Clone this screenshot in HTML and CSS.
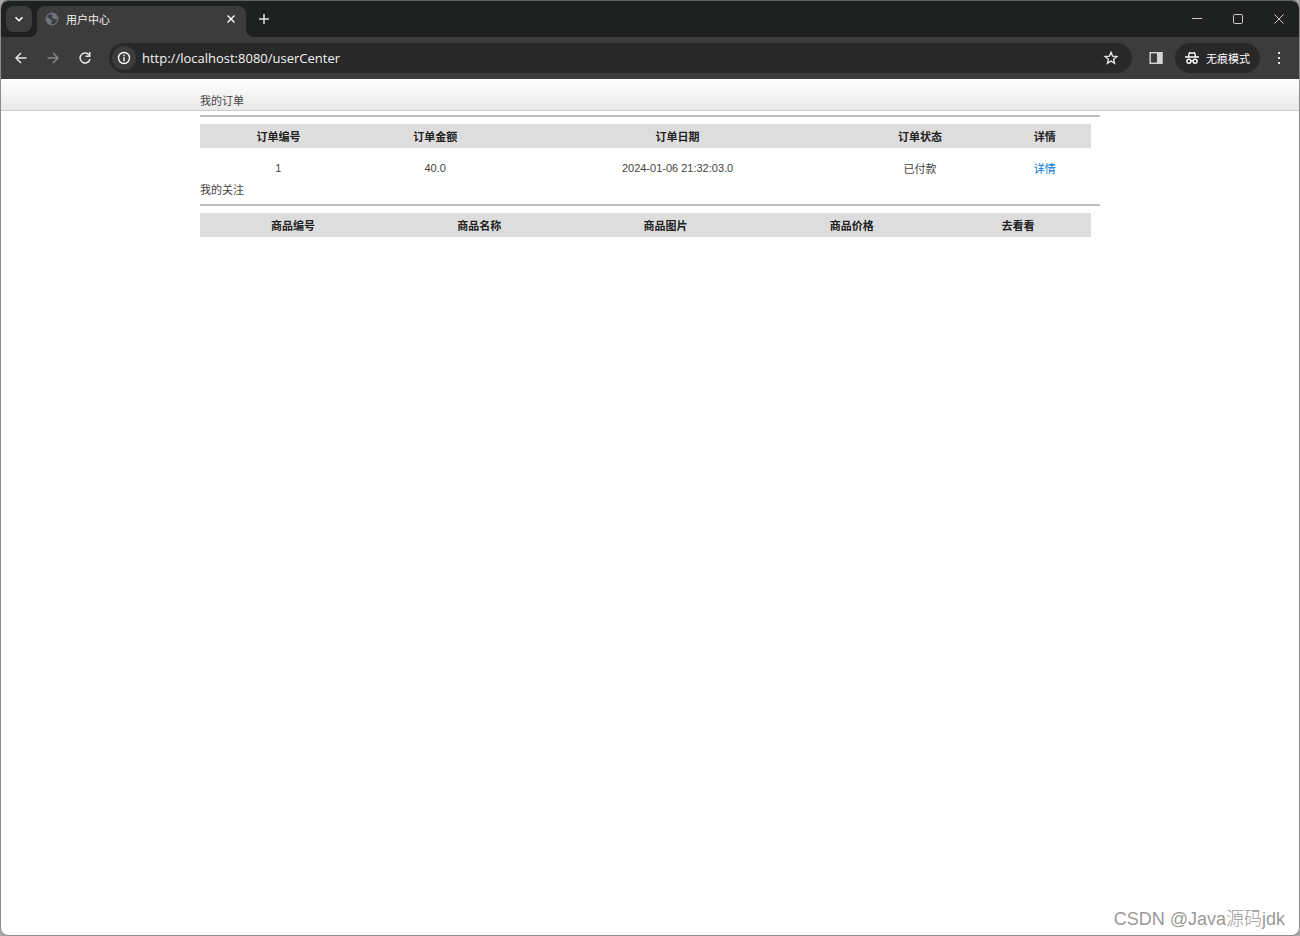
FILE: index.html
```html
<!DOCTYPE html>
<html lang="zh-CN">
<head>
    <meta charset="UTF-8">
    <meta name="viewport" content="width=device-width, initial-scale=1.0">
    <title>用户中心</title>
    <link rel="stylesheet" href="styles.css">
</head>
<body>
    <div class="window">
        <div class="titlebar">
            <button class="tab-search" aria-label="搜索标签页">
                <svg width="10" height="10" viewBox="0 0 10 10"><path d="M1.500 3.200l3.500 3.500 3.500-3.500" fill="none" stroke="#fff" stroke-width="1.600"/></svg>
            </button>
            <div class="tab">
                <svg width="14" height="14" viewBox="0 0 14 14"><circle cx="7" cy="7" r="5.800" fill="#3c3c3c" stroke="#6f757b" stroke-width="1.200"/><path d="M1.500 5.500c1.800.2 3 .6 3.400 1.600.5 1 1.700.4 2 1.500.3 1.200-.8 1.600-.7 3.900C3.500 12.300 1.200 9.500 1.500 5.500zM6 1.500c0 1.800 1.500 1.300 1.600 2.400.1 1-1.600.9-.9 1.900.7.9 2.300.2 3 1 .6.700 1.500.8 2.800.4-.1-3-2.400-5.700-6.500-5.700z" fill="#6f757b"/></svg>
                <span class="tab-title">用户中心</span>
                <button class="icon-btn tab-close" aria-label="关闭标签页">
                    <svg width="10" height="10" viewBox="0 0 10 10"><path d="M1.500 1.500l7 7M8.500 1.500l-7 7" stroke="#fff" stroke-width="1.400"/></svg>
                </button>
            </div>
            <button class="icon-btn new-tab" aria-label="新标签页">
                <svg width="12" height="12" viewBox="0 0 12 12"><path d="M6 1v10M1 6h10" stroke="#e3e3e3" stroke-width="1.500"/></svg>
            </button>
            <div class="window-controls">
                <button class="icon-btn" aria-label="最小化"><svg width="10" height="10" viewBox="0 0 10 10"><path d="M0 4.500h10" stroke="#ccc"/></svg></button>
                <button class="icon-btn" aria-label="最大化"><svg width="10" height="10" viewBox="0 0 10 10"><rect x=".5" y=".5" width="9" height="9" rx="1.200" fill="none" stroke="#ccc"/></svg></button>
                <button class="icon-btn" aria-label="关闭"><svg width="10" height="10" viewBox="0 0 10 10"><path d="M.5.5l9 9M9.500.5l-9 9" stroke="#ccc"/></svg></button>
            </div>
        </div>

        <div class="toolbar">
            <button class="icon-btn" aria-label="后退"><svg width="14" height="14" viewBox="0 0 14 14"><path d="M12.500 7h-10M7 2L2 7l5 5" fill="none" stroke="#e3e3e3" stroke-width="1.500"/></svg></button>
            <button class="icon-btn" aria-label="前进"><svg width="14" height="14" viewBox="0 0 14 14"><path d="M1.500 7h10M7 2l5 5-5 5" fill="none" stroke="#858585" stroke-width="1.500"/></svg></button>
            <button class="icon-btn" aria-label="重新加载"><svg width="14" height="14" viewBox="0 0 14 14"><path d="M11.300 4.300A5 5 0 1 0 12 8" fill="none" stroke="#e3e3e3" stroke-width="1.500"/><path d="M12.500 1v5h-5V4.500H11V1z" fill="#e3e3e3"/></svg></button>
            <div class="address">
                <button class="icon-btn site-info" aria-label="网站信息"><svg width="14" height="14" viewBox="0 0 14 14"><circle cx="7" cy="7" r="5.500" fill="none" stroke="#fff" stroke-width="1.400"/><path d="M7 6.200v4M7 3.700v1.500" stroke="#fff" stroke-width="1.400"/></svg></button>
                <input class="url" type="text" aria-label="地址栏" value="http://localhost:8080/userCenter">
                <button class="icon-btn" aria-label="收藏"><svg width="16" height="16" viewBox="0 0 16 16"><path d="M8 2.300l1.600 3.900 4.200.3-3.200 2.700 1 4.100L8 11.100l-3.600 2.200 1-4.100-3.200-2.700 4.200-.3z" fill="none" stroke="#e3e3e3" stroke-width="1.400"/></svg></button>
            </div>
            <button class="icon-btn side-panel" aria-label="侧边栏"><svg width="14" height="14" viewBox="0 0 14 14"><rect x="1.200" y="1.700" width="11.600" height="10.600" fill="none" stroke="#d5d5d5" stroke-width="1.400"/><path d="M8 1h5.500v12H8z" fill="#d5d5d5"/></svg></button>
            <button class="incognito">
                <svg width="14" height="14" viewBox="0 0 14 14"><path d="M4.800 1c.8 0 1.200.5 2.200.5S8.400 1 9.200 1c.8 0 1 .5 1.200 1.200l.8 3.100H14v1.400H0V5.300h2.800l.8-3.100C3.800 1.500 4 1 4.800 1zm.1 1.400l-.7 2.900h5.600l-.7-2.900c-.8.300-1.200.500-2.100.500s-1.300-.2-2.100-.5z" fill="#fff"/><circle cx="3.900" cy="10.300" r="2" fill="none" stroke="#fff" stroke-width="1.400"/><circle cx="10.100" cy="10.300" r="2" fill="none" stroke="#fff" stroke-width="1.400"/><path d="M5.800 9.900c.8-.5 1.600-.5 2.400 0" fill="none" stroke="#fff" stroke-width="1.200"/></svg>
                <span>无痕模式</span>
            </button>
            <button class="icon-btn menu" aria-label="菜单"><svg width="4" height="14" viewBox="0 0 4 14"><path d="M1 1h2v2H1zM1 6h2v2H1zM1 11h2v2H1z" fill="#e3e3e3"/></svg></button>
        </div>

        <main class="page">
            <div class="container">
                <h2>我的订单</h2>
                <table class="orders">
                    <colgroup>
                        <col class="col-id"><col class="col-money"><col class="col-date"><col class="col-status"><col class="col-detail">
                    </colgroup>
                    <thead>
                        <tr><th>订单编号</th><th>订单金额</th><th>订单日期</th><th>订单状态</th><th>详情</th></tr>
                    </thead>
                    <tbody>
                        <tr><td>1</td><td>40.0</td><td>2024-01-06 21:32:03.0</td><td>已付款</td><td><a href="#">详情</a></td></tr>
                    </tbody>
                </table>

                <h2>我的关注</h2>
                <table class="follows">
                    <colgroup>
                        <col class="col-goods" span="4"><col>
                    </colgroup>
                    <thead>
                        <tr><th>商品编号</th><th>商品名称</th><th>商品图片</th><th>商品价格</th><th>去看看</th></tr>
                    </thead>
                </table>
            </div>
        </main>
        <div class="watermark">CSDN @Java源码jdk</div>
    </div>
</body>
</html>
```
FILE: styles.css
```css
* {
    margin: 0;
    padding: 0;
    box-sizing: border-box;
}

body {
    font-family: "Liberation Sans", "Noto Sans CJK SC", sans-serif;
    font-size: 11px;
    color: #444;
    background-color: #aaa;
}

button {
    border: none;
    background: none;
    color: inherit;
    font: inherit;
    cursor: pointer;
}

svg {
    display: block;
    flex-shrink: 0;
}

/* browser window */
.window {
    position: relative;
    display: flex;
    flex-direction: column;
    min-height: 100vh;
    border: 1px solid #8c8c8c;
    border-top-color: #5c6461;
    border-radius: 8px;
    background-color: #fff;
    overflow: hidden;
}

.titlebar {
    display: flex;
    align-items: flex-end;
    height: 36px;
    padding-left: 5px;
    background-color: #1f2120;
}

.tab-search {
    display: flex;
    align-items: center;
    justify-content: center;
    width: 26px;
    height: 26px;
    margin-bottom: 5px;
    border-radius: 8px;
    background-color: #3c3c3c;
}

.tab {
    position: relative;
    display: flex;
    align-items: center;
    width: 209px;
    height: 31px;
    margin-left: 5px;
    padding: 0 6px 5px 8px;
    border-radius: 8px 8px 0 0;
    background-color: #3c3c3c;
    color: #eee;
}

/* curved feet of the active tab */
.tab::before,
.tab::after {
    content: "";
    position: absolute;
    bottom: 0;
    width: 8px;
    height: 8px;
}

.tab::before {
    right: 100%;
    background: radial-gradient(circle at 0 0, transparent 8px, #3c3c3c 8px);
}

.tab::after {
    left: 100%;
    background: radial-gradient(circle at 100% 0, transparent 8px, #3c3c3c 8px);
}

.tab-title {
    flex: 1;
    margin-left: 7px;
}

.icon-btn {
    display: flex;
    align-items: center;
    justify-content: center;
    width: 26px;
    height: 26px;
}

.tab-close {
    width: 18px;
    height: 18px;
}

.new-tab {
    margin-left: 5px;
    margin-bottom: 5px;
}

.window-controls {
    display: flex;
    align-self: center;
    margin-left: auto;
}

.window-controls .icon-btn {
    width: 41px;
}

.toolbar {
    display: flex;
    align-items: center;
    height: 42px;
    padding: 0 7px;
    gap: 6px;
    background-color: #3c3c3c;
}

.address {
    display: flex;
    flex: 1;
    align-items: center;
    height: 30px;
    margin-left: 5px;
    padding: 0 8px 0 3px;
    border-radius: 15px;
    background-color: #282828;
}

.site-info {
    width: 24px;
    height: 24px;
    border-radius: 12px;
    background-color: #3c3c3c;
}

.url {
    flex: 1;
    min-width: 0;
    margin-left: 6px;
    border: none;
    outline: none;
    background: none;
    color: #f2f2f2;
    font-family: "Open Sans", sans-serif;
    font-size: 13px;
}

.side-panel {
    margin-left: 5px;
}

.incognito {
    display: flex;
    align-items: center;
    height: 30px;
    padding: 0 10px;
    gap: 7px;
    border-radius: 15px;
    background-color: #282828;
    color: #fff;
}

/* page */
.page {
    flex: 1;
    padding-top: 11px;
    background: linear-gradient(#fff, #e9e9e9) no-repeat 0 0 / 100% 31px,
                linear-gradient(#ccc, #ccc) no-repeat 0 31px / 100% 1px;
}

.container {
    width: 900px;
    max-width: 100%;
    margin: 0 auto;
}

h2 {
    height: 27px;
    margin-bottom: 7px;
    border-bottom: 2px solid #bfbfbf;
    font-size: 11px;
    font-weight: normal;
    line-height: 22px;
}

table {
    width: 99%;
    table-layout: fixed;
    border-collapse: collapse;
    text-align: center;
}

th {
    height: 24px;
    background-color: #ddd;
    color: #222;
}

td {
    height: 31px;
    padding: 9px 0 1px;
}

a {
    color: #0072d2;
    text-decoration: none;
}

.col-id,
.col-money,
.col-status {
    width: 17.6%;
}

.col-date {
    width: 36.8%;
}

.col-goods {
    width: 20.9%;
}

.watermark {
    position: absolute;
    right: 14px;
    bottom: 5px;
    color: #999;
    font-size: 18px;
    font-weight: 300;
}
```
